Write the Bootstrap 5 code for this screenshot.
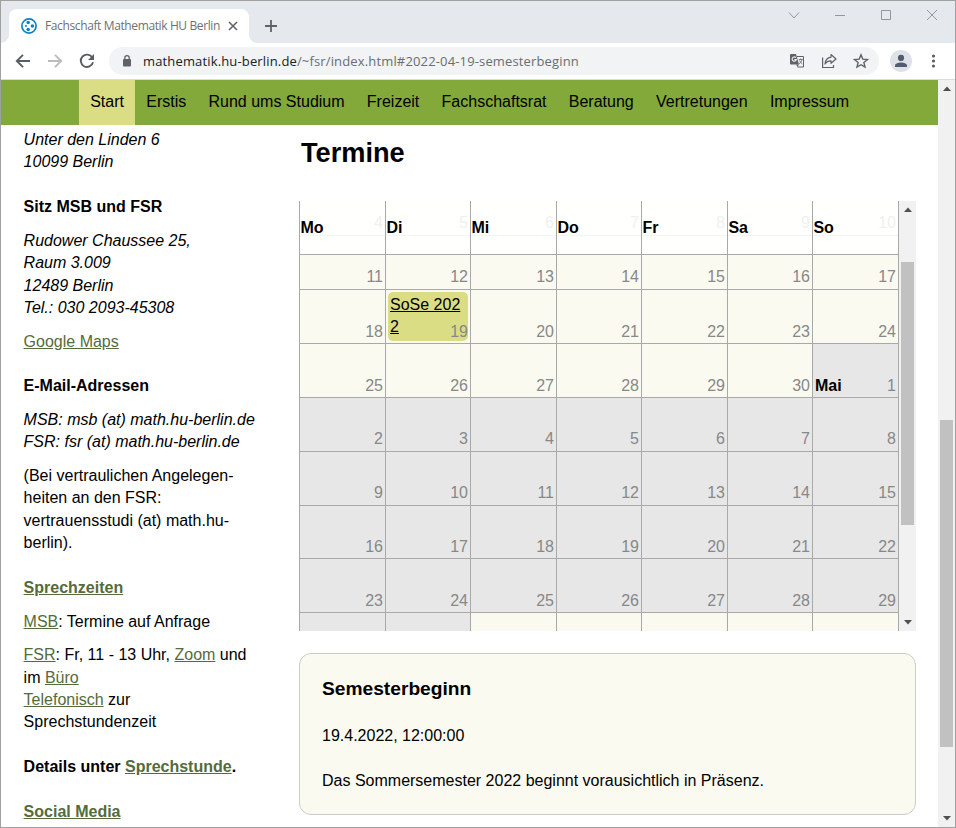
<!DOCTYPE html>
<html lang="de">
<head>
<meta charset="utf-8">
<title>Fachschaft Mathematik HU Berlin</title>
<link href="https://cdn.jsdelivr.net/npm/bootstrap@5.3.0/dist/css/bootstrap.min.css" rel="stylesheet">
<style>
html,body{height:100%}
body{font-family:"Liberation Sans",Arial,sans-serif;font-size:16px;line-height:22.4px;color:#000;overflow:hidden}
svg{display:block;flex:none}
.window{width:956px;height:828px;border:1px solid #a0a0a0}
.ui{font-family:"Open Sans","Noto Sans",sans-serif}
.tabstrip{height:42px;background:#e5e9ed;padding:8px 0 0 8px}
.tab{width:240px;height:34px;background:#fff;border-radius:8px 8px 0 0;padding:0 8px 0 12px;position:relative}
.tab::before,.tab::after{content:"";position:absolute;bottom:0;width:8px;height:8px}
.tab::before{left:-8px;background:radial-gradient(circle at 0 0,transparent 7.5px,#fff 8px)}
.tab::after{right:-8px;background:radial-gradient(circle at 100% 0,transparent 7.5px,#fff 8px)}
.tab-title{font-size:12px;color:#6d7074;letter-spacing:-.38px;margin-left:8px}
.winctl{gap:30px;padding:0 15px 0 0;height:14px}
.toolbar{height:37px;border-bottom:1px solid #dadcdf;padding:0 14px}
.omnibox{width:770px;height:28px;border-radius:14px;background:#f1f3f4;margin-left:14px;padding:0 10px 0 12px}
.omnibox .actions{gap:16px}
.url{font-size:13px;color:#6a6e72;margin-left:10px;letter-spacing:.15px}
.url b{font-weight:400;color:#202124}
.avatar{width:22px;height:22px;border-radius:50%;background:#dee1e6;margin-left:11px}
.sitenav{height:45px;background:#82a93a;padding-left:78px}
.sitenav .nav-link{color:#000;padding:11px 11.15px 0;height:45px;line-height:22.4px;white-space:nowrap}
.sitenav .nav-link.active{background:#dadd84}
.sidebar{width:298px;padding:4px 30px 0 22.6px}
.sidebar p{margin:0}
.sidebar p+p,.sidebar h3+p{margin-top:11.2px}
.sidebar h3{font-size:16px;line-height:22.4px;font-weight:700;margin:22.4px 0 0}
.sidebar a{color:#556b3c}
.main-col{width:617px}
.main-col h1{font-size:27.2px;line-height:38px;font-weight:700;margin:9px 0 29px 2px}
.cal{height:430px}
.cal-grid,.cal-head{display:grid;grid-template-columns:86px 85px 86px 85px 86px 85px 87px}
.cal-grid{grid-template-rows:35px 54px 54px 54px 54px 54px 53px 54px 18px;width:600px;height:430px}
.day{border-left:1px solid #a9a9a9;border-bottom:1px solid #a9a9a9;background:#fafaf0;color:#888;padding:0 2px 0;display:flex;align-items:flex-end;justify-content:space-between;position:relative}
.day:nth-child(7n){border-right:1px solid #a9a9a9}
.day:nth-child(-n+14),.day:nth-child(n+29):nth-child(-n+42){padding-bottom:1px}
.day span{margin-left:auto;position:relative}
.day b{color:#000}
.day.alt{background:#e7e7e7}
.day:nth-child(n+57){border-bottom:0}
.ev{position:absolute;left:2px;top:2px;width:80px;height:49px;border-radius:5px;background:#dadd84;color:#000;padding:2px 2px;word-break:break-all}
.cal-head{position:absolute;left:0;top:0;width:600px;height:54px}
.cal-head div{border-left:1px solid #a9a9a9;border-bottom:1px solid #a9a9a9;background:rgba(255,255,255,.87);background-clip:padding-box;font-weight:700;padding:16px 0 0 .4px}
.cal-head div:last-child{border-right:1px solid #a9a9a9}
.sb{width:17px;background:#f1f1f1;padding:6px 0}
.thumb{width:13px;background:#c1c1c1}
.thumb-cal{height:263px;margin-top:50px}
.thumb-page{height:327px;margin-top:329px}
.info{height:162px;margin-top:22px;border:1px solid #ccc;border-radius:12px;background:#fafaf0;padding:22px}
.info h2{font-size:19.2px;line-height:25px;font-weight:700;margin:0 0 24px}
.info p{margin:0 0 22.4px}
</style>
</head>
<body>
<div class="window d-flex flex-column overflow-hidden">
  <div class="tabstrip ui d-flex">
    <div class="tab d-flex align-items-center">
      <svg width="16" height="16" viewBox="0 0 16 16"><circle cx="8" cy="8" r="7.100" fill="#fff" stroke="#0c83c0" stroke-width="1.700"/><g fill="#0c83c0"><circle cx="7.200" cy="4.500" r="1.750"/><circle cx="11.400" cy="8" r="1.750"/><circle cx="7.200" cy="11.500" r="1.750"/><circle cx="5" cy="8" r="1"/></g></svg>
      <span class="tab-title text-nowrap">Fachschaft Mathematik HU Berlin</span>
      <svg class="ms-auto" width="16" height="16" viewBox="0 0 16 16"><path d="M4 4l8 8M12 4l-8 8" stroke="#5f6368" stroke-width="1.6"/></svg>
    </div>
    <svg class="ms-3" width="13" height="34" viewBox="0 0 13 34"><path d="M0 17h12M6 11v12" stroke="#5f6368" stroke-width="1.8"/></svg>
    <div class="winctl d-flex ms-auto">
      <svg width="16" height="14" viewBox="0 0 16 14"><path d="M3 3.500l5 5.500 5-5.500" fill="none" stroke="#94979a"/></svg>
      <svg width="16" height="14" viewBox="0 0 16 14"><path d="M3 6.500h10" stroke="#94979a"/></svg>
      <svg width="16" height="14" viewBox="0 0 16 14"><path d="M3.500 1.500h9v9h-9z" fill="none" stroke="#94979a"/></svg>
      <svg width="16" height="14" viewBox="0 0 16 14"><path d="M3 1l10 10M13 1L3 11" stroke="#94979a"/></svg>
    </div>
  </div>
  <div class="toolbar ui d-flex align-items-center">
    <svg width="16" height="16" viewBox="0 0 16 16"><path d="M15 8H2M8 1.800L1.800 8 8 14.200" fill="none" stroke="#5a5d61" stroke-width="1.900"/></svg>
    <svg width="16" height="16" viewBox="0 0 16 16" class="ms-3"><path d="M1 8h13M8 1.800L14.200 8 8 14.200" fill="none" stroke="#babcbe" stroke-width="1.900"/></svg>
    <svg width="16" height="16" viewBox="0 0 16 16" class="ms-3"><path d="M13.300 4.600A6.200 6.200 0 1 0 14 9.300" fill="none" stroke="#5a5d61" stroke-width="1.900"/><path d="M15 1v6H9z" fill="#5a5d61"/></svg>
    <div class="omnibox d-flex align-items-center">
      <svg width="12" height="14" viewBox="0 0 12 14"><rect x="2" y="5" width="8" height="7.500" rx="1" fill="#5f6368"/><path d="M3.800 5.500V3.800a2.200 2.200 0 0 1 4.400 0v1.700" fill="none" stroke="#5f6368" stroke-width="1.300"/></svg>
      <span class="url text-nowrap"><b>mathematik.hu-berlin.de</b>/~fsr/index.html#2022-04-19-semesterbeginn</span>
      <div class="actions d-flex ms-auto">
        <svg width="16" height="16" viewBox="0 0 16 16"><path d="M8 3.500h6.500v10.500H8.500" fill="none" stroke="#5f6368"/><path d="M2 1h5l3 10.500H2a1 1 0 0 1-1-1V2a1 1 0 0 1 1-1z" fill="#5f6368"/><path d="M7 11.500h3L8.500 14z" fill="#5f6368"/><path d="M6.800 4.600A2.100 2.100 0 1 0 7.300 6.500H5.400" fill="none" stroke="#f1f3f4" stroke-width="1.100"/><path d="M9.800 6.500h4M11.700 5.500v1M13 6.500c-.4 2-1.500 3.500-3 4.500M10.500 7.500c.6 1.500 1.500 2.500 2.800 3.500" fill="none" stroke="#5f6368" stroke-width=".8"/></svg>
        <svg width="16" height="16" viewBox="0 0 16 16"><path d="M1.600 4.500v10h10.900v-2.500" fill="none" stroke="#5f6368" stroke-width="1.200"/><path d="M10 1.500l5 4.500-5 4.300V7.800C7.500 7.800 5.500 8.500 4 11c.3-3.500 2.500-6.300 6-6.800z" fill="none" stroke="#5f6368" stroke-width="1.200" stroke-linejoin="round"/></svg>
        <svg width="16" height="16" viewBox="0 0 16 16"><path d="M8 1.800l1.800 4.300 4.700.4-3.600 3 1.100 4.600L8 11.700l-4 2.400 1.100-4.600-3.600-3 4.700-.4z" fill="none" stroke="#5f6368" stroke-width="1.400"/></svg>
      </div>
    </div>
    <div class="avatar d-flex justify-content-center align-items-center"><svg width="14" height="14" viewBox="0 0 14 14"><circle cx="7" cy="3.900" r="3.100" fill="#525c70"/><path d="M1 13v-1.600C1 9.300 4.500 8.400 7 8.400s6 .9 6 3V13z" fill="#525c70"/></svg></div>
    <svg class="ms-auto" width="16" height="16" viewBox="0 0 16 16"><g fill="#5a5d61"><circle cx="8.500" cy="3" r="1.600"/><circle cx="8.500" cy="8" r="1.600"/><circle cx="8.500" cy="13" r="1.600"/></g></svg>
  </div>

  <div class="d-flex flex-grow-1 overflow-hidden">
    <div class="flex-grow-1 d-flex flex-column overflow-hidden">
      <nav class="sitenav nav flex-nowrap">
        <a class="nav-link active" href="#">Start</a>
        <a class="nav-link" href="#">Erstis</a>
        <a class="nav-link" href="#">Rund ums Studium</a>
        <a class="nav-link" href="#">Freizeit</a>
        <a class="nav-link" href="#">Fachschaftsrat</a>
        <a class="nav-link" href="#">Beratung</a>
        <a class="nav-link" href="#">Vertretungen</a>
        <a class="nav-link" href="#">Impressum</a>
      </nav>
      <div class="d-flex">
        <aside class="sidebar flex-shrink-0">
          <p class="fst-italic">Unter den Linden 6<br>10099 Berlin</p>
          <h3>Sitz MSB und FSR</h3>
          <p class="fst-italic">Rudower Chaussee 25,<br>Raum 3.009<br>12489 Berlin<br>Tel.: 030 2093-45308</p>
          <p><a href="#">Google Maps</a></p>
          <h3>E-Mail-Adressen</h3>
          <p class="fst-italic text-nowrap">MSB: msb (at) math.hu-berlin.de<br>FSR: fsr (at) math.hu-berlin.de</p>
          <p>(Bei vertraulichen Angelegen-<br>heiten an den FSR:<br>vertrauensstudi (at) math.hu-<br>berlin).</p>
          <h3><a href="#">Sprechzeiten</a></h3>
          <p><a href="#">MSB</a>: Termine auf Anfrage</p>
          <p><a href="#">FSR</a>: Fr, 11 - 13 Uhr, <a href="#">Zoom</a> und<br>im <a href="#">Büro</a><br><a href="#">Telefonisch</a> zur<br>Sprechstundenzeit</p>
          <h3>Details unter <a href="#">Sprechstunde</a>.</h3>
          <h3><a href="#">Social Media</a></h3>
        </aside>
        <main class="main-col flex-shrink-0">
          <h1>Termine</h1>
          <div class="cal d-flex position-relative">
            <div class="cal-grid">
              <div class="day"><span>4</span></div><div class="day"><span>5</span></div><div class="day"><span>6</span></div><div class="day"><span>7</span></div><div class="day"><span>8</span></div><div class="day"><span>9</span></div><div class="day"><span>10</span></div>
              <div class="day"><span>11</span></div><div class="day"><span>12</span></div><div class="day"><span>13</span></div><div class="day"><span>14</span></div><div class="day"><span>15</span></div><div class="day"><span>16</span></div><div class="day"><span>17</span></div>
              <div class="day"><span>18</span></div><div class="day"><a class="ev" href="#">SoSe 2022</a><span>19</span></div><div class="day"><span>20</span></div><div class="day"><span>21</span></div><div class="day"><span>22</span></div><div class="day"><span>23</span></div><div class="day"><span>24</span></div>
              <div class="day"><span>25</span></div><div class="day"><span>26</span></div><div class="day"><span>27</span></div><div class="day"><span>28</span></div><div class="day"><span>29</span></div><div class="day"><span>30</span></div><div class="day alt"><b>Mai</b><span>1</span></div>
              <div class="day alt"><span>2</span></div><div class="day alt"><span>3</span></div><div class="day alt"><span>4</span></div><div class="day alt"><span>5</span></div><div class="day alt"><span>6</span></div><div class="day alt"><span>7</span></div><div class="day alt"><span>8</span></div>
              <div class="day alt"><span>9</span></div><div class="day alt"><span>10</span></div><div class="day alt"><span>11</span></div><div class="day alt"><span>12</span></div><div class="day alt"><span>13</span></div><div class="day alt"><span>14</span></div><div class="day alt"><span>15</span></div>
              <div class="day alt"><span>16</span></div><div class="day alt"><span>17</span></div><div class="day alt"><span>18</span></div><div class="day alt"><span>19</span></div><div class="day alt"><span>20</span></div><div class="day alt"><span>21</span></div><div class="day alt"><span>22</span></div>
              <div class="day alt"><span>23</span></div><div class="day alt"><span>24</span></div><div class="day alt"><span>25</span></div><div class="day alt"><span>26</span></div><div class="day alt"><span>27</span></div><div class="day alt"><span>28</span></div><div class="day alt"><span>29</span></div>
              <div class="day alt"></div><div class="day alt"></div><div class="day"></div><div class="day"></div><div class="day"></div><div class="day"></div><div class="day"></div>
            </div>
            <div class="cal-head"><div>Mo</div><div>Di</div><div>Mi</div><div>Do</div><div>Fr</div><div>Sa</div><div>So</div></div>
            <div class="sb d-flex flex-column align-items-center">
              <svg width="8" height="5" viewBox="0 0 8 5"><path d="M0 5l4-4.500L8 5z" fill="#505050"/></svg>
              <div class="thumb thumb-cal"></div>
              <svg class="mt-auto" width="8" height="5" viewBox="0 0 8 5"><path d="M0 0l4 4.500L8 0z" fill="#505050"/></svg>
            </div>
          </div>
          <section class="info">
            <h2>Semesterbeginn</h2>
            <p>19.4.2022, 12:00:00</p>
            <p>Das Sommersemester 2022 beginnt vorausichtlich in Präsenz.</p>
          </section>
        </main>
      </div>
    </div>
    <div class="sb d-flex flex-column align-items-center flex-shrink-0">
      <svg width="8" height="5" viewBox="0 0 8 5"><path d="M0 5l4-4.500L8 5z" fill="#505050"/></svg>
      <div class="thumb thumb-page"></div>
      <svg class="mt-auto" width="8" height="5" viewBox="0 0 8 5"><path d="M0 0l4 4.500L8 0z" fill="#505050"/></svg>
    </div>
  </div>
</div>
<script src="https://cdn.jsdelivr.net/npm/bootstrap@5.3.0/dist/js/bootstrap.bundle.min.js"></script>
</body>
</html>
